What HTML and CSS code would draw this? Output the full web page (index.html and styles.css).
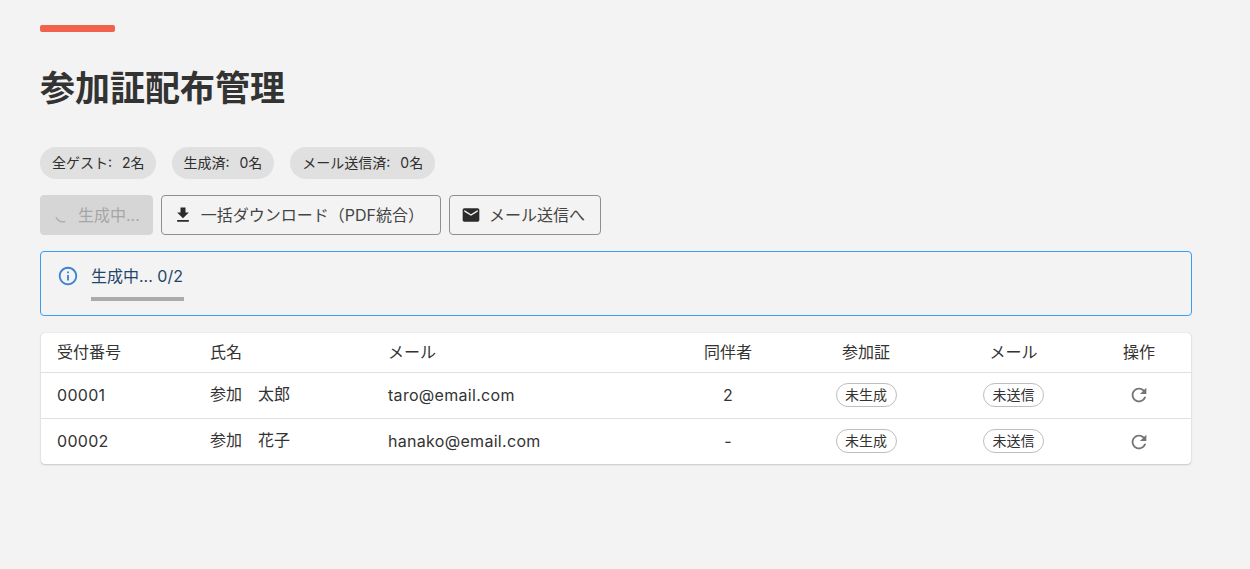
FILE: index.html
```html
<!DOCTYPE html>
<html lang="ja">
<head>
<meta charset="utf-8">
<title>参加証配布管理</title>
<link rel="stylesheet" href="styles.css">
</head>
<body>
<main class="page">
  <div class="accent"></div>
  <h1 class="title">参加証配布管理</h1>
  <div class="chips">
    <span class="chip chip-first">全ゲスト: 2名</span>
    <span class="chip">生成済: 0名</span>
    <span class="chip">メール送信済: 0名</span>
  </div>
  <div class="actions">
    <button class="btn btn-disabled" type="button">
      <svg class="icon spinner" viewBox="0 0 20 20"><path d="M4 12.3A7.5 7.5 0 0 0 13.3 16.4" fill="none" stroke="#b0b0b0" stroke-width="1.6"/></svg>
      生成中...
    </button>
    <button class="btn btn-wide" type="button">
      <svg class="icon" viewBox="0 0 24 24"><path d="M19 9h-4V3H9v6H5l7 7 7-7zM5 18v2h14v-2H5z"/></svg>
      一括ダウンロード（PDF統合）
    </button>
    <button class="btn" type="button">
      <svg class="icon" viewBox="0 0 24 24"><path d="M20 4H4c-1.1 0-2 .9-2 2v12c0 1.1.9 2 2 2h16c1.1 0 2-.9 2-2V6c0-1.1-.9-2-2-2zm0 4-8 5-8-5V6l8 5 8-5v2z"/></svg>
      メール送信へ
    </button>
  </div>
  <div class="alert">
    <svg class="alert-icon" viewBox="0 0 24 24"><path d="M11 7h2v2h-2zm0 4h2v6h-2zm1-9C6.48 2 2 6.48 2 12s4.48 10 10 10 10-4.48 10-10S17.52 2 12 2zm0 18c-4.41 0-8-3.59-8-8s3.59-8 8-8 8 3.59 8 8-3.59 8-8 8z"/></svg>
    <div class="alert-body">
      <div class="alert-text">生成中... 0/2</div>
      <div class="progress"></div>
    </div>
  </div>
  <div class="table-card">
    <table class="table">
      <colgroup>
        <col class="c-no"><col class="c-name"><col class="c-mail"><col class="c-comp"><col class="c-card"><col class="c-sent"><col class="c-op">
      </colgroup>
      <thead>
        <tr>
          <th>受付番号</th><th>氏名</th><th>メール</th>
          <th class="center">同伴者</th><th class="center">参加証</th><th class="center">メール</th><th class="center op">操作</th>
        </tr>
      </thead>
      <tbody>
        <tr>
          <td class="num">00001</td><td class="name">参加　太郎</td><td class="num">taro@email.com</td>
          <td class="center num">2</td>
          <td class="center flush"><span class="tag">未生成</span></td>
          <td class="center flush"><span class="tag">未送信</span></td>
          <td class="center op flush"><svg class="refresh" viewBox="0 0 24 24"><path d="M17.65 6.35A7.958 7.958 0 0 0 12 4c-4.42 0-7.99 3.58-7.99 8s3.57 8 7.99 8c3.73 0 6.84-2.55 7.73-6h-2.08A5.99 5.99 0 0 1 12 18c-3.31 0-6-2.69-6-6s2.69-6 6-6c1.66 0 3.14.69 4.22 1.78L13 11h7V4l-2.35 2.35z"/></svg></td>
        </tr>
        <tr>
          <td class="num">00002</td><td class="name">参加　花子</td><td class="num">hanako@email.com</td>
          <td class="center num">-</td>
          <td class="center flush"><span class="tag">未生成</span></td>
          <td class="center flush"><span class="tag">未送信</span></td>
          <td class="center op flush"><svg class="refresh" viewBox="0 0 24 24"><path d="M17.65 6.35A7.958 7.958 0 0 0 12 4c-4.42 0-7.99 3.58-7.99 8s3.57 8 7.99 8c3.73 0 6.84-2.55 7.73-6h-2.08A5.99 5.99 0 0 1 12 18c-3.31 0-6-2.69-6-6s2.69-6 6-6c1.66 0 3.14.69 4.22 1.78L13 11h7V4l-2.35 2.35z"/></svg></td>
        </tr>
      </tbody>
    </table>
  </div>
</main>
</body>
</html>
```

FILE: styles.css
```css
* { box-sizing: border-box; }
html, body { margin: 0; height: 100%; }
body {
  background: #f3f3f3;
  color: #333;
  font-family: Inter, "Noto Sans CJK JP", "Noto Sans", sans-serif;
}
.page { padding: 25px 58px 0 40px; }
.accent { width: 75px; height: 7px; background: #f2614c; border-radius: 2px; }
.title {
  margin: 33px 0 0;
  font-size: 35px;
  line-height: 46px;
  font-weight: 700;
  color: #333;
}
.chips { display: flex; gap: 16px; margin-top: 36px; }
.chip {
  height: 32px;
  padding: 0 12px 2px;
  display: flex;
  align-items: center;
  border-radius: 16px;
  background: #e0e0e0;
  font-size: 14px;
  word-spacing: 6px;
  color: #2f2f2f;
  white-space: nowrap;
}
.chip-first { padding-right: 11px; }
.actions { display: flex; gap: 8px; margin-top: 16px; }
.btn {
  height: 40px;
  padding: 0 15px 2px 11px;
  display: flex;
  align-items: center;
  gap: 8px;
  background: transparent;
  border: 1px solid #8f8f8f;
  border-radius: 4px;
  font: inherit;
  font-size: 16px;
  color: #444;
  white-space: nowrap;
}
.btn .icon { margin-top: 2px; }
.btn-wide { padding-right: 16px; }
.btn-disabled {
  padding-right: 12px;
  gap: 6px;
  background: #d6d6d6;
  border-color: #d6d6d6;
  color: #a6a6a6;
}
.icon { width: 20px; height: 20px; fill: #2b2b2b; flex: none; }
.spinner { fill: none; }
.alert {
  margin-top: 16px;
  height: 65px;
  padding: 12px 16px;
  display: flex;
  gap: 12px;
  border: 1px solid #3a9df2;
  border-radius: 4px;
}
.alert-icon { width: 22px; height: 22px; fill: #3c82d4; flex: none; margin-top: 1px; }
.alert-body { width: 93px; }
.alert-text { font-size: 16px; line-height: 24px; color: #1f4568; white-space: nowrap; }
.progress { height: 4px; margin-top: 9px; background: #ababab; }
.table-card {
  margin: 17px 1px 0;
  background: #fff;
  border-radius: 4px;
  box-shadow: 0 0 1px rgba(0,0,0,.25), 0 1px 2px rgba(0,0,0,.16);
  overflow: hidden;
}
.table { width: 100%; border-collapse: collapse; table-layout: fixed; }
.c-no { width: 153px; }
.c-name { width: 178px; }
.c-mail { width: 294px; }
.c-comp { width: 124px; }
.c-card { width: 152px; }
.c-sent { width: 143px; }
.c-op { width: 106px; }
th, td { padding: 0 16px 2px; text-align: left; }
th {
  height: 39px;
  padding-bottom: 3px;
  font-size: 16px;
  font-weight: 400;
  color: #333;
  border-bottom: 1px solid #e0e0e0;
}
td {
  height: 46px;
  font-size: 16px;
  color: #333;
  border-bottom: 1px solid #e0e0e0;
}
tbody tr:last-child td { border-bottom: 0; }
.center { text-align: center; }
.op { padding-left: 18px; }
.num { padding-bottom: 0; letter-spacing: .3px; }
.name { padding-bottom: 4px; }
.flush { padding-bottom: 0; }
.tag {
  display: inline-flex;
  align-items: center;
  height: 24px;
  padding: 0 8.5px 2px;
  border: 1px solid #bdbdbd;
  border-radius: 12px;
  font-size: 14px;
  color: #333;
  vertical-align: middle;
}
.refresh { width: 22px; height: 22px; fill: #757575; vertical-align: middle; }
```
